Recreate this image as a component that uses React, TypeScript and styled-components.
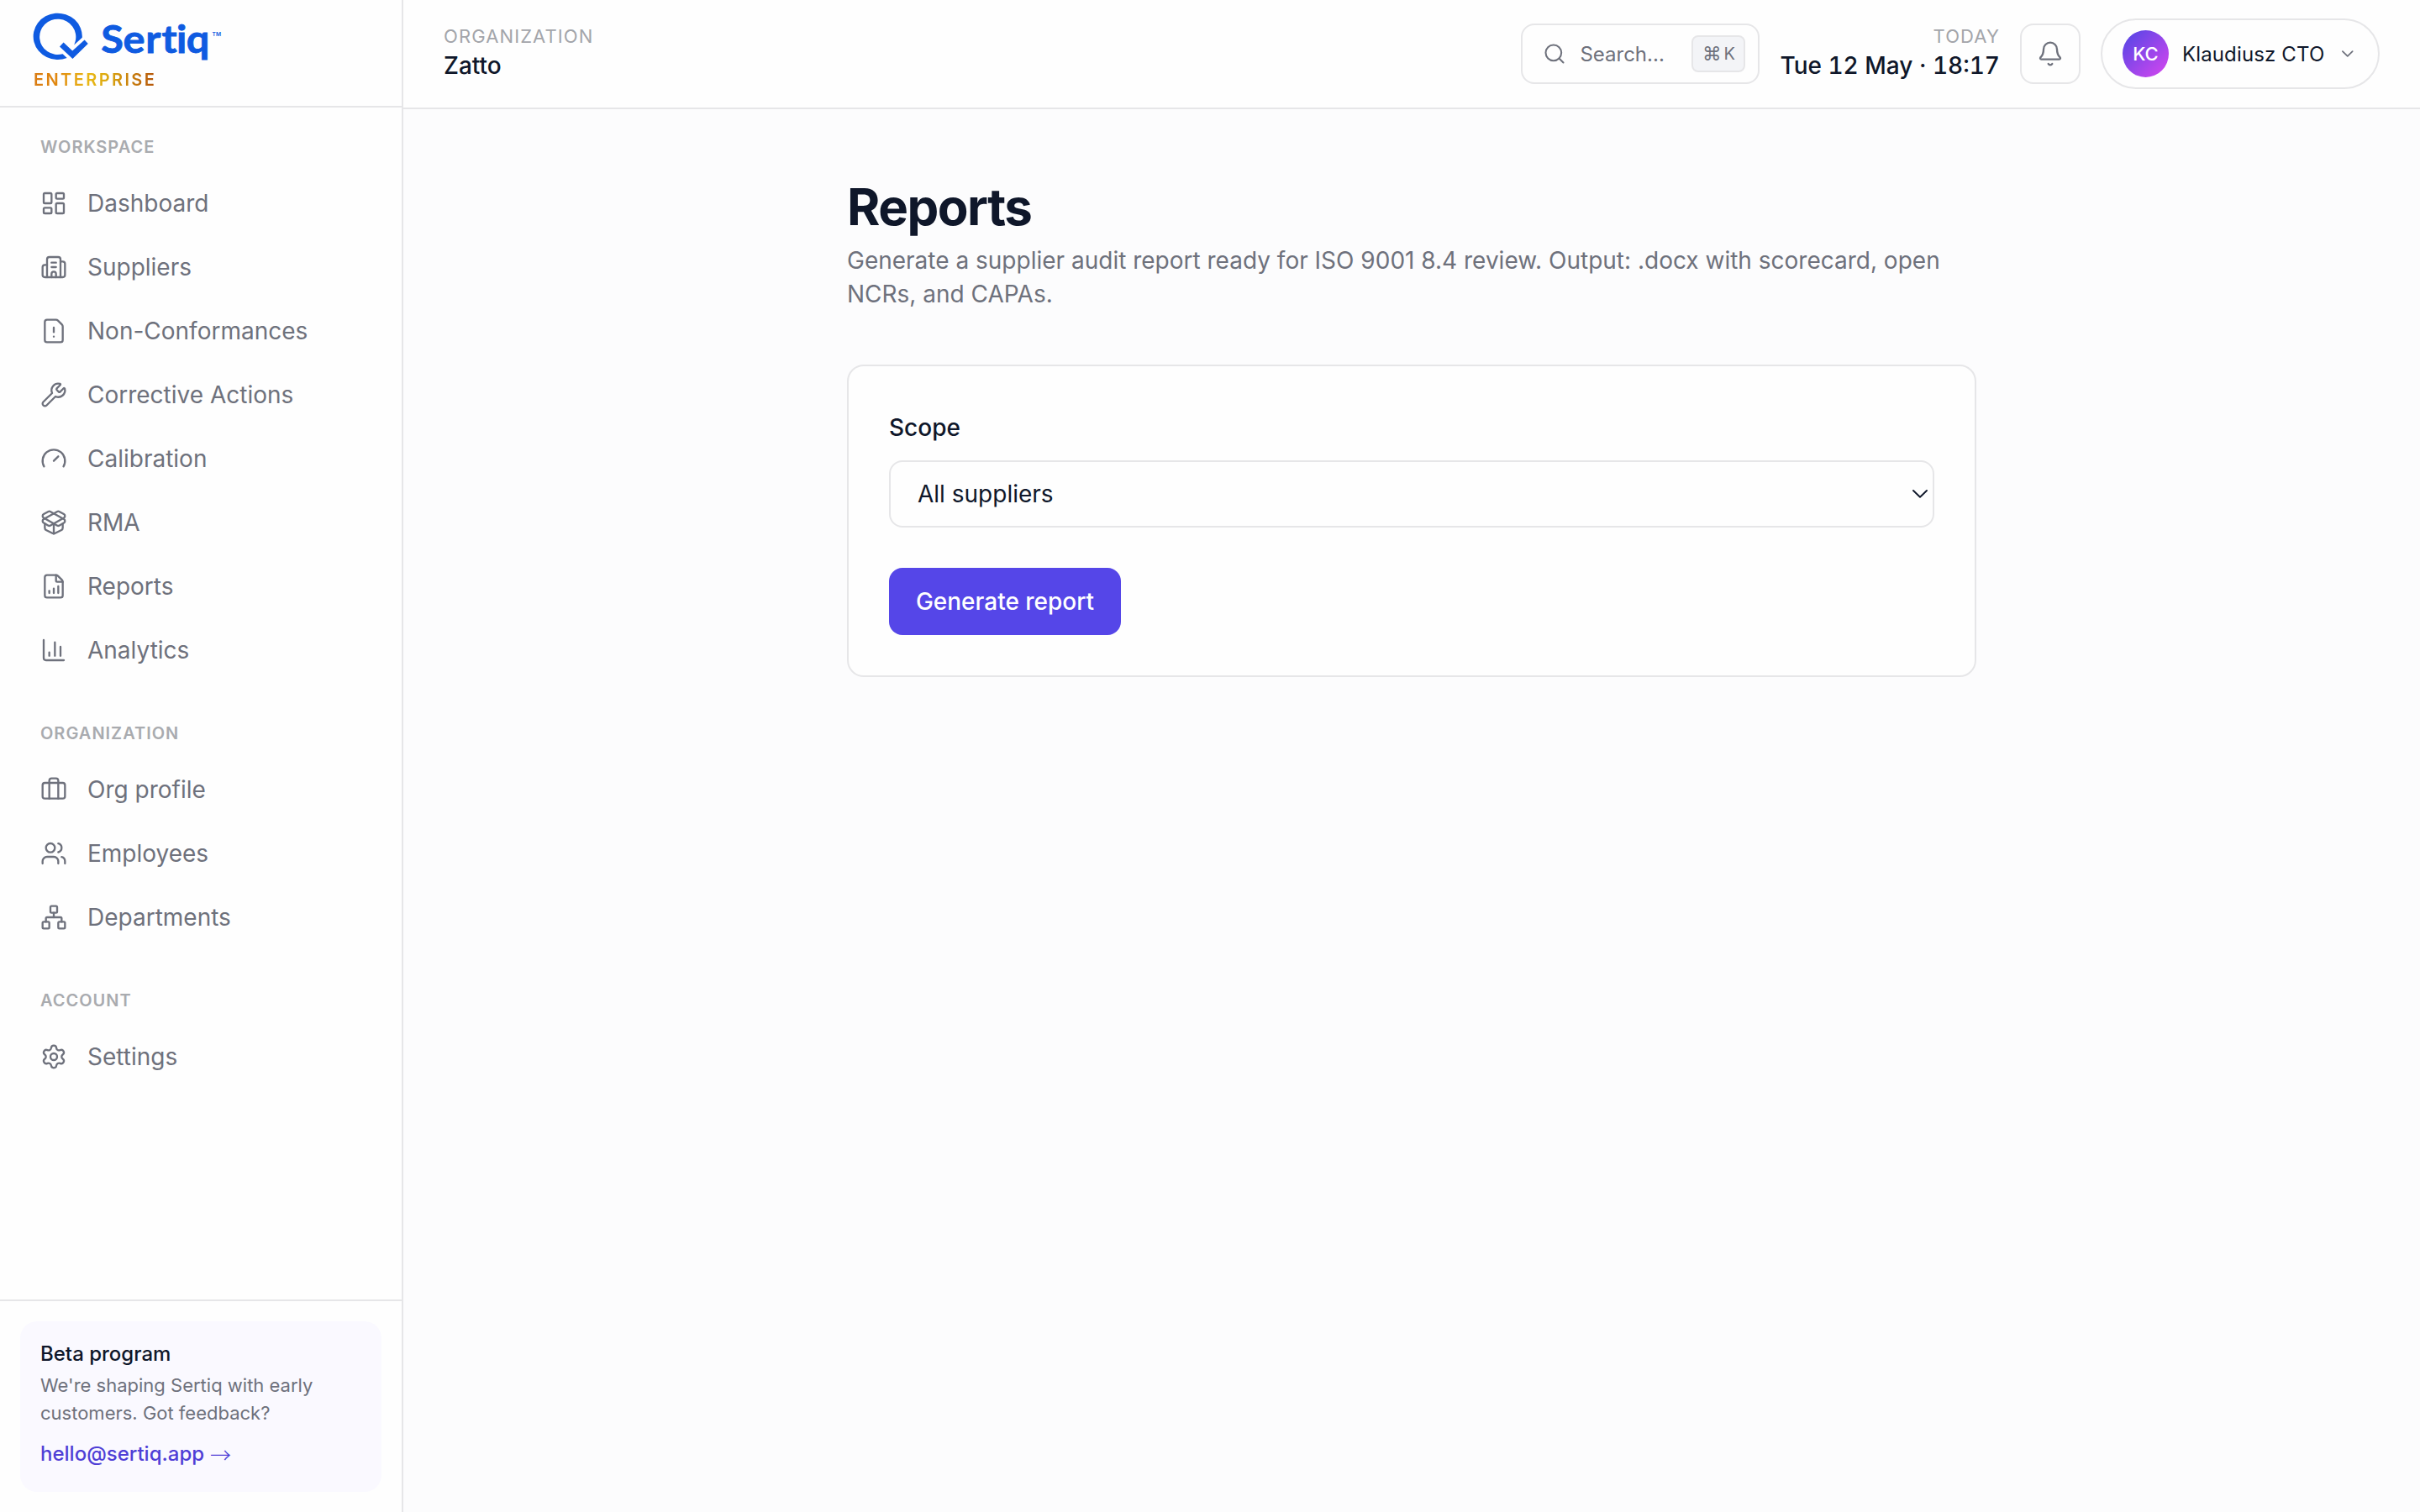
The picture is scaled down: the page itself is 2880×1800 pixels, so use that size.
import React from 'react';
import styled, { createGlobalStyle } from 'styled-components';
import {
  Bell,
  Briefcase,
  Building2,
  ChartColumn,
  ChevronDown,
  FileChartColumnIncreasing,
  FileWarning,
  Gauge,
  LayoutDashboard,
  Network,
  PackageOpen,
  Search,
  Settings,
  Users,
  Wrench,
  type LucideIcon,
} from 'lucide-react';

const color = {
  ink: '#0f172a',
  muted: '#6e717c',
  faint: '#a3a5aa',
  line: '#e6e6e8',
  canvas: '#fcfcfd',
  surface: '#fefefe',
  accent: '#5546e8',
  logo: '#0f5be1',
};

const GlobalStyle = createGlobalStyle`
  *, *::before, *::after { box-sizing: border-box; }
  body {
    margin: 0;
    background: ${color.canvas};
    color: ${color.ink};
    font-family: Inter, 'Liberation Sans', sans-serif;
    font-size: 28px;
  }
  h1, p { margin: 0; }
  button { font: inherit; color: inherit; cursor: pointer; }
`;

const Shell = styled.div`
  display: grid;
  grid-template-columns: 480px minmax(0, 1fr);
  height: 100vh;
`;

/* Sidebar */

const Sidebar = styled.aside`
  display: flex;
  flex-direction: column;
  border-right: 2px solid ${color.line};
  background: ${color.surface};
`;

const Brand = styled.div`
  display: flex;
  flex-direction: column;
  align-items: flex-start;
  height: 128px;
  padding: 12px 0 0 38px;
  border-bottom: 2px solid ${color.line};
`;

const LogoSvg = styled.svg`
  display: block;
  width: 228px;
  height: 64px;
  flex: none;
  fill: ${color.logo};
`;

const Wordmark = styled.text`
  font-family: Lato, 'Liberation Sans', sans-serif;
  font-size: 45.5px;
  font-weight: 700;
  font-variant-ligatures: none;
  stroke: ${color.logo};
  stroke-width: 0.8px;
`;

const Trademark = styled.text`
  font-family: Inter, sans-serif;
  font-size: 6.6px;
  font-weight: 600;
`;

const Plan = styled.span`
  margin: 7px 0 0 2px;
  font-size: 20px;
  line-height: 25px;
  font-weight: 600;
  letter-spacing: 0.12em;
  background: linear-gradient(90deg, #d97b12 0%, #e0870f 18%, #e9b715 45%, #dba80f 60%, #b45309 100%);
  background-clip: text;
  -webkit-background-clip: text;
  color: transparent;
`;

const Nav = styled.nav`
  display: flex;
  flex-direction: column;
  flex: 1;
  gap: 48px;
  padding: 32px 24px;
`;

const NavSection = styled.section`
  display: flex;
  flex-direction: column;
  gap: 4px;
`;

const NavHeading = styled.div`
  margin-bottom: 12px;
  padding: 0 24px;
  font-size: 20px;
  line-height: 30px;
  font-weight: 600;
  letter-spacing: 0.05em;
  color: #a9abaf;
`;

const NavItem = styled.a`
  display: flex;
  align-items: center;
  gap: 24px;
  height: 72px;
  padding: 0 24px;
  color: ${color.muted};
`;

const SidebarFooter = styled.div`
  padding: 24px;
  border-top: 2px solid ${color.line};
`;

const BetaCard = styled.div`
  display: flex;
  flex-direction: column;
  align-items: flex-start;
  height: 203px;
  padding: 21px 24px 0;
  border-radius: 20px;
  background: #faf9ff;
`;

const BetaTitle = styled.div`
  font-size: 24px;
  line-height: 36px;
  font-weight: 500;
`;

const BetaText = styled.p`
  margin-top: 3px;
  font-size: 22px;
  line-height: 33px;
  color: ${color.muted};
`;

const BetaLink = styled.a`
  display: flex;
  gap: 7px;
  margin-top: 14px;
  font-size: 24px;
  line-height: 36px;
  font-weight: 500;
  color: #4f3fd6;
`;

const Arrow = styled.span`
  font-family: 'Noto Sans CJK JP', sans-serif;
  font-size: 25px;
  font-weight: 300;
  line-height: 36px;
`;

/* Top bar */

const Main = styled.div`
  display: flex;
  flex-direction: column;
`;

const Topbar = styled.header`
  display: flex;
  align-items: center;
  gap: 24px;
  height: 130px;
  padding: 0 48px;
  border-bottom: 2px solid ${color.line};
  background: ${color.surface};
`;

const Fact = styled.div<{ $end?: boolean }>`
  display: flex;
  flex-direction: column;
  text-align: ${(p) => (p.$end ? 'right' : 'left')};
  margin-right: ${(p) => (p.$end ? '0' : 'auto')};
`;

const FactLabel = styled.span`
  font-size: 22px;
  line-height: 28px;
  letter-spacing: 0.05em;
  color: ${color.faint};
`;

const FactValue = styled.span`
  line-height: 42px;
  font-weight: 500;
  font-variant-numeric: tabular-nums;
`;

const SearchBox = styled.button`
  display: flex;
  align-items: center;
  gap: 16px;
  width: 284px;
  height: 72px;
  padding: 0 15px 0 24px;
  border: 2px solid ${color.line};
  border-radius: 16px;
  background: ${color.surface};
  color: ${color.muted};
  font-size: 24px;
`;

const Shortcut = styled.kbd`
  display: flex;
  align-items: center;
  justify-content: center;
  gap: 3px;
  width: 64px;
  height: 44px;
  margin-left: auto;
  border: 2px solid ${color.line};
  border-radius: 8px;
  background: #f3f4f7;
  font-family: Inter, sans-serif;
  font-size: 20px;
`;

const CommandKey = styled.span`
  font-family: 'DejaVu Sans', sans-serif;
  font-size: 22.5px;
  line-height: 24px;
`;

const IconButton = styled.button`
  display: flex;
  align-items: center;
  justify-content: center;
  width: 72px;
  height: 72px;
  padding: 0;
  border: 2px solid ${color.line};
  border-radius: 16px;
  background: ${color.surface};
  color: ${color.muted};
`;

const UserMenu = styled.button`
  display: flex;
  align-items: center;
  gap: 16px;
  width: 332px;
  height: 84px;
  padding: 0 24px;
  border: 2px solid ${color.line};
  border-radius: 42px;
  background: ${color.surface};
  font-size: 24px;
`;

const UserName = styled.span`
  flex: 1;
  text-align: left;
  white-space: nowrap;
  letter-spacing: 0.006em;
`;

const Avatar = styled.span`
  display: flex;
  align-items: center;
  justify-content: center;
  width: 56px;
  height: 56px;
  border-radius: 50%;
  background: linear-gradient(135deg, #4f46e5, #d946ef);
  color: #fff;
  font-size: 22px;
  font-weight: 500;
`;

/* Page */

const Page = styled.main`
  width: 1344px;
  margin: 0 auto;
  padding-top: 79px;
`;

const Title = styled.h1`
  font-size: 60px;
  line-height: 75px;
  font-weight: 700;
  letter-spacing: -0.025em;
`;

const Lead = styled.p`
  margin-top: 6px;
  line-height: 40px;
  color: ${color.muted};
`;

const Card = styled.section`
  display: flex;
  flex-direction: column;
  align-items: flex-start;
  margin-top: 64px;
  padding: 48px;
  border: 2px solid ${color.line};
  border-radius: 20px;
  background: ${color.surface};
`;

const FieldLabel = styled.label`
  padding-top: 1px;
  line-height: 48px;
  font-weight: 500;
`;

const SelectBox = styled.button`
  display: flex;
  align-items: center;
  justify-content: space-between;
  width: 100%;
  height: 80px;
  margin-top: 15px;
  padding: 0 5px 0 32px;
  border: 2px solid ${color.line};
  border-radius: 16px;
  background: ${color.surface};
`;

const SelectArrow = styled.svg`
  width: 20px;
  height: 12px;
  fill: none;
  stroke: ${color.ink};
  stroke-width: 1.9;
  stroke-linecap: round;
  stroke-linejoin: round;
`;

const PrimaryButton = styled.button`
  width: 276px;
  height: 80px;
  margin-top: 48px;
  padding: 0;
  border: 0;
  border-radius: 16px;
  background: ${color.accent};
  color: #fff;
  font-weight: 500;
`;

type NavEntry = { label: string; icon: LucideIcon };

const sections: { heading: string; items: NavEntry[] }[] = [
  {
    heading: 'WORKSPACE',
    items: [
      { label: 'Dashboard', icon: LayoutDashboard },
      { label: 'Suppliers', icon: Building2 },
      { label: 'Non-Conformances', icon: FileWarning },
      { label: 'Corrective Actions', icon: Wrench },
      { label: 'Calibration', icon: Gauge },
      { label: 'RMA', icon: PackageOpen },
      { label: 'Reports', icon: FileChartColumnIncreasing },
      { label: 'Analytics', icon: ChartColumn },
    ],
  },
  {
    heading: 'ORGANIZATION',
    items: [
      { label: 'Org profile', icon: Briefcase },
      { label: 'Employees', icon: Users },
      { label: 'Departments', icon: Network },
    ],
  },
  {
    heading: 'ACCOUNT',
    items: [{ label: 'Settings', icon: Settings }],
  },
];

function Logo() {
  return (
    <LogoSvg viewBox="38 12 228 64" role="img" aria-label="Sertiq">
      <path d="M97.8 44.8A29.1 27.7 0 1 0 79.7 69L74.6 64.2A21.6 21.1 0 1 1 89.6 49.3L88.2 53.6Z" />
      <path d="M71 55.6 75.6 50.6 86.2 60.4 100.6 47.6 104.8 52 86.4 70Z" />
      <Wordmark x="112.5 136.9 161.9 179.9 196.3 207.3" y="62.9" transform="scale(1.07 1)">
        Sertiq
      </Wordmark>
      <Trademark x="252.6" y="42.9">
        TM
      </Trademark>
    </LogoSvg>
  );
}

export default function App() {
  return (
    <>
      <GlobalStyle />
      <Shell>
        <Sidebar>
          <Brand>
            <Logo />
            <Plan>ENTERPRISE</Plan>
          </Brand>
          <Nav>
            {sections.map((section) => (
              <NavSection key={section.heading}>
                <NavHeading>{section.heading}</NavHeading>
                {section.items.map(({ label, icon: Icon }) => (
                  <NavItem key={label}>
                    <Icon size={32} strokeWidth={1.75} />
                    {label}
                  </NavItem>
                ))}
              </NavSection>
            ))}
          </Nav>
          <SidebarFooter>
            <BetaCard>
              <BetaTitle>Beta program</BetaTitle>
              <BetaText>We're shaping Sertiq with early customers. Got feedback?</BetaText>
              <BetaLink>
                hello@sertiq.app<Arrow>→</Arrow>
              </BetaLink>
            </BetaCard>
          </SidebarFooter>
        </Sidebar>
        <Main>
          <Topbar>
            <Fact>
              <FactLabel>ORGANIZATION</FactLabel>
              <FactValue>Zatto</FactValue>
            </Fact>
            <SearchBox>
              <Search size={28} strokeWidth={1.75} />
              Search...
              <Shortcut>
                <CommandKey>⌘</CommandKey>K
              </Shortcut>
            </SearchBox>
            <Fact $end>
              <FactLabel>TODAY</FactLabel>
              <FactValue>Tue 12 May · 18:17</FactValue>
            </Fact>
            <IconButton aria-label="Notifications">
              <Bell size={32} strokeWidth={1.75} />
            </IconButton>
            <UserMenu>
              <Avatar>KC</Avatar>
              <UserName>Klaudiusz CTO</UserName>
              <ChevronDown size={24} strokeWidth={1.75} color={color.muted} />
            </UserMenu>
          </Topbar>
          <Page>
            <Title>Reports</Title>
            <Lead>
              Generate a supplier audit report ready for ISO 9001 8.4 review. Output: .docx with scorecard, open
              NCRs, and CAPAs.
            </Lead>
            <Card>
              <FieldLabel>Scope</FieldLabel>
              <SelectBox>
                All suppliers
                <SelectArrow viewBox="0 0 20 12">
                  <path d="M2 2 10 9.8 18 2" />
                </SelectArrow>
              </SelectBox>
              <PrimaryButton>Generate report</PrimaryButton>
            </Card>
          </Page>
        </Main>
      </Shell>
    </>
  );
}
